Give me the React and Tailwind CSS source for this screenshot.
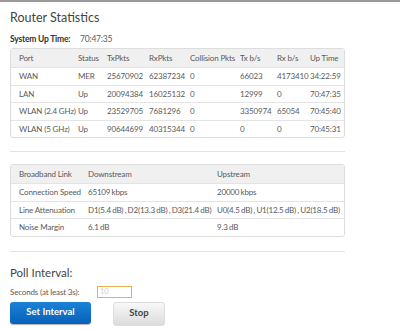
export default function App() {
  const ports = [
    ["WAN", "MER", "25670902", "62387234", "0", "66023", "4173410", "34:22:59"],
    ["LAN", "Up", "20094384", "16025132", "0", "12999", "0", "70:47:35"],
    ["WLAN (2.4 GHz)", "Up", "23529705", "7681296", "0", "3350974", "65054", "70:45:40"],
    ["WLAN (5 GHz)", "Up", "90644699", "40315344", "0", "0", "0", "70:45:31"],
  ];
  const heads = ["Port", "Status", "TxPkts", "RxPkts", "Collision Pkts", "Tx b/s", "Rx b/s", "Up Time"];
  const widths = ["w-[59px]", "w-[29px]", "w-[42px]", "w-[41px]", "w-[50px]", "w-[37px]", "w-[33px]", "w-[35px]"];
  const bb = [
    ["Connection Speed", "65109 kbps", "20000 kbps"],
    ["Line Attenuation", "D1(5.4 dB) , D2(13.3 dB) , D3(21.4 dB)", "U0(4.5 dB) , U1(12.5 dB) , U2(18.5 dB)"],
    ["Noise Margin", "6.1 dB", "9.3 dB"],
  ];
  return (
    <div className="w-[400px] h-[330px] bg-white border-t-2 border-[#9a9a9a] text-[#5a5a5a] overflow-hidden" style={{ fontFamily: "Lato, 'Open Sans', sans-serif" }}>
      <div className="pl-[10px] w-[345px]">
        <div className="h-[28px] pt-[8px] text-[12.5px] leading-[15px] text-[#444] whitespace-nowrap">Router Statistics</div>
        <div className="h-[18px] flex items-center text-[8.5px] whitespace-nowrap tracking-[-0.2px]">
          <span className="w-[70px] font-bold text-[#333]">System Up Time:</span>
          <span>70:47:35</span>
        </div>
        <div className="border border-[#ddd] rounded-[3px] overflow-hidden text-[8px] tracking-[-0.15px]">
          <div className="flex bg-[#f0f0f0] h-[18px] items-center pl-[8px]">
            {heads.map((h, i) => (
              <div key={i} className={`${widths[i]} shrink-0 whitespace-nowrap`}>{h}</div>
            ))}
          </div>
          {ports.map((r, ri) => (
            <div key={ri} className="flex h-[17.5px] items-center pl-[8px] border-t border-[#e4e4e4]">
              {r.map((c, i) => (
                <div key={i} className={`${widths[i]} shrink-0 whitespace-nowrap`}>{c}</div>
              ))}
            </div>
          ))}
        </div>
        <div className="mt-[13px] border-t border-[#e2e2e2]" />
        <div className="mt-[12px] border border-[#ddd] rounded-[3px] overflow-hidden text-[8px] tracking-[-0.15px]">
          <div className="flex bg-[#f0f0f0] h-[18px] items-center pl-[8px]">
            <div className="w-[69px] shrink-0">Broadband Link</div>
            <div className="w-[129px] shrink-0">Downstream</div>
            <div>Upstream</div>
          </div>
          {bb.map((r, ri) => (
            <div key={ri} className="flex h-[17.5px] items-center pl-[8px] border-t border-[#e4e4e4]">
              <div className="w-[69px] shrink-0 whitespace-nowrap">{r[0]}</div>
              <div className="w-[129px] shrink-0 whitespace-nowrap tracking-[-0.2px] [word-spacing:-0.5px]">{r[1]}</div>
              <div className="whitespace-nowrap tracking-[-0.2px] [word-spacing:-0.5px]">{r[2]}</div>
            </div>
          ))}
        </div>
        <div className="mt-[14px] border-t border-[#e2e2e2]" />
        <div className="mt-[13px] text-[11.5px] leading-[15px] text-[#444]">Poll Interval:</div>
        <div className="mt-[6px] flex items-center text-[8px] tracking-[-0.15px]">
          <span className="w-[87px] whitespace-nowrap">Seconds (at least 3s):</span>
          <input className="w-[35px] h-[12px] border border-[#e8b04a] text-[7.5px] px-[2px] outline-none placeholder:text-[#ccc]" placeholder="10" />
        </div>
        <div className="mt-[4px] flex items-start">
          <button className="w-[81px] h-[22px] rounded-[3px] text-white font-bold text-[9.5px] bg-gradient-to-b from-[#1a82d8] to-[#0861b8] shadow-[0_1px_1px_rgba(0,0,0,0.3)]">Set Interval</button>
          <button className="ml-[22px] w-[52px] h-[24px] rounded-[3px] text-[#444] font-bold text-[9.5px] bg-gradient-to-b from-[#f8f8f8] to-[#dcdcdc] border border-[#ddd]">Stop</button>
        </div>
      </div>
    </div>
  );
}
